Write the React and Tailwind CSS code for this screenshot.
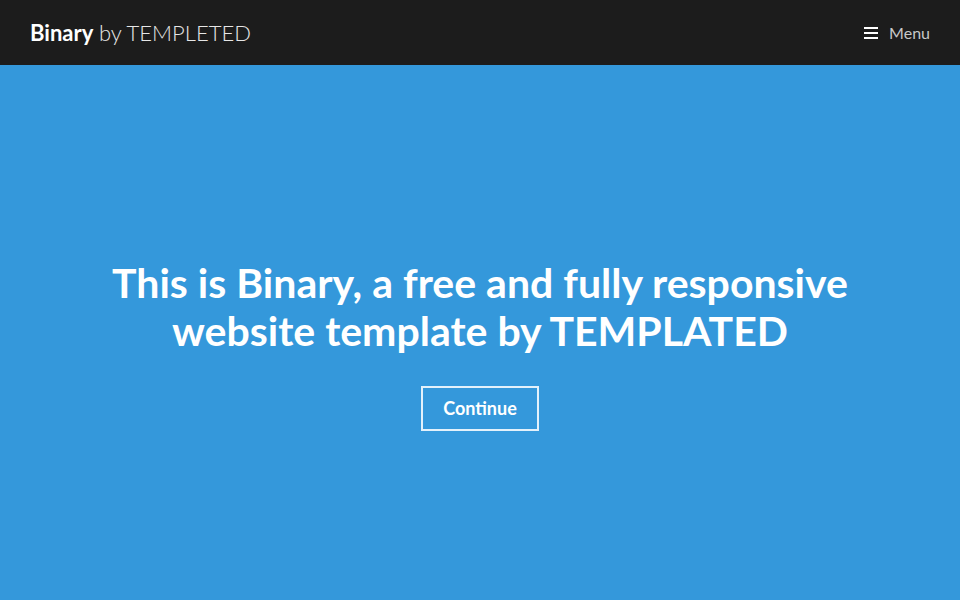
import React from 'react'

export default function App() {
  return (
    <div className="min-h-screen flex flex-col bg-[#3498db] font-['Lato','Liberation_Sans',sans-serif]">
      <header className="h-[65px] bg-[#1c1c1c] flex items-center justify-between px-[30px]">
        <div className="text-[22px] text-white leading-none">
          <span className="font-bold">Binary</span>{' '}
          <span className="font-light text-[#e6e6e6]">by TEMPLETED</span>
        </div>
        <button className="flex items-center gap-[11px] text-[16px] text-[#c8c8c8]">
          <span className="flex flex-col gap-[3px]">
            <span className="block w-[14px] h-[2px] bg-white" />
            <span className="block w-[14px] h-[2px] bg-white" />
            <span className="block w-[14px] h-[2px] bg-white" />
          </span>
          Menu
        </button>
      </header>

      <section className="flex-1 flex flex-col items-center pt-[194px] text-center">
        <h1 className="text-[41px] leading-[48px] font-bold text-white">
          This is Binary, a free and fully responsive
          <br />
          website template by TEMPLATED
        </h1>
        <a href="#" className="mt-[31px] h-[45px] px-[20px] flex items-center border-2 border-[#e3f1fb] text-white font-bold text-[18px]">
          Continue
        </a>
      </section>
    </div>
  )
}
